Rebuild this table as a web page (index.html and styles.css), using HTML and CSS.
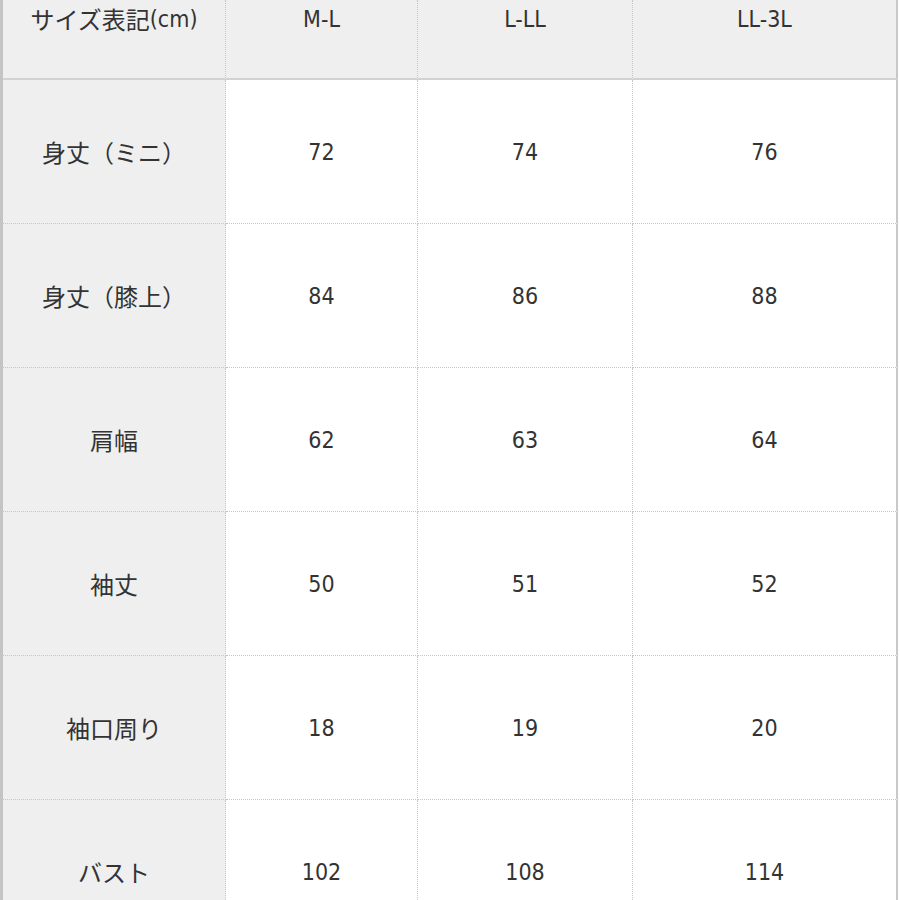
FILE: index.html
```html
<!DOCTYPE html>
<html lang="ja">
<head>
<meta charset="utf-8">
<title>サイズ表</title>
<link rel="stylesheet" href="styles.css">
</head>
<body>
<div class="table">
  <div class="cell head label">サイズ表記<span class="latin">(cm)</span></div>
  <div class="cell head">M-L</div>
  <div class="cell head">L-LL</div>
  <div class="cell head last">LL-3L</div>

  <div class="cell label">身丈（ミニ）</div>
  <div class="cell">72</div>
  <div class="cell">74</div>
  <div class="cell last">76</div>

  <div class="cell label">身丈（膝上）</div>
  <div class="cell">84</div>
  <div class="cell">86</div>
  <div class="cell last">88</div>

  <div class="cell label">肩幅</div>
  <div class="cell">62</div>
  <div class="cell">63</div>
  <div class="cell last">64</div>

  <div class="cell label">袖丈</div>
  <div class="cell">50</div>
  <div class="cell">51</div>
  <div class="cell last">52</div>

  <div class="cell label">袖口周り</div>
  <div class="cell">18</div>
  <div class="cell">19</div>
  <div class="cell last">20</div>

  <div class="cell label">バスト</div>
  <div class="cell">102</div>
  <div class="cell">108</div>
  <div class="cell last">114</div>
</div>
</body>
</html>
```

FILE: styles.css
```css
html, body {
  margin: 0;
  padding: 0;
  background: #ffffff;
  overflow: hidden;
}

.table {
  display: grid;
  grid-template-columns: 223px 192px 215px 265px;
  grid-template-rows: 80px repeat(6, 144px);
  width: 898px;
  border-left: 3px solid #c4c4c4;
  box-sizing: border-box;
  font-family: "DejaVu Sans", sans-serif;
  font-stretch: condensed;
  font-size: 23px;
  color: #333333;
}

.cell {
  box-sizing: border-box;
  display: flex;
  align-items: center;
  justify-content: center;
  background: #ffffff;
  border-right: 1px dotted #c6c6c6;
  border-bottom: 1px dotted #c6c6c6;
  line-height: 30px;
  white-space: nowrap;
}

.label {
  background: #efefef;
  font-family: "Noto Sans CJK JP", sans-serif;
  font-size: 24px;
  font-stretch: normal;
}

.latin {
  font-family: "DejaVu Sans", sans-serif;
  font-stretch: condensed;
  font-size: 23px;
}

.head {
  background: #efefef;
  align-items: flex-start;
  padding-top: 4px;
  border-bottom: 2px solid #d2d2d2;
}

.last {
  border-right: 2px solid #c8c8c8;
}
```
